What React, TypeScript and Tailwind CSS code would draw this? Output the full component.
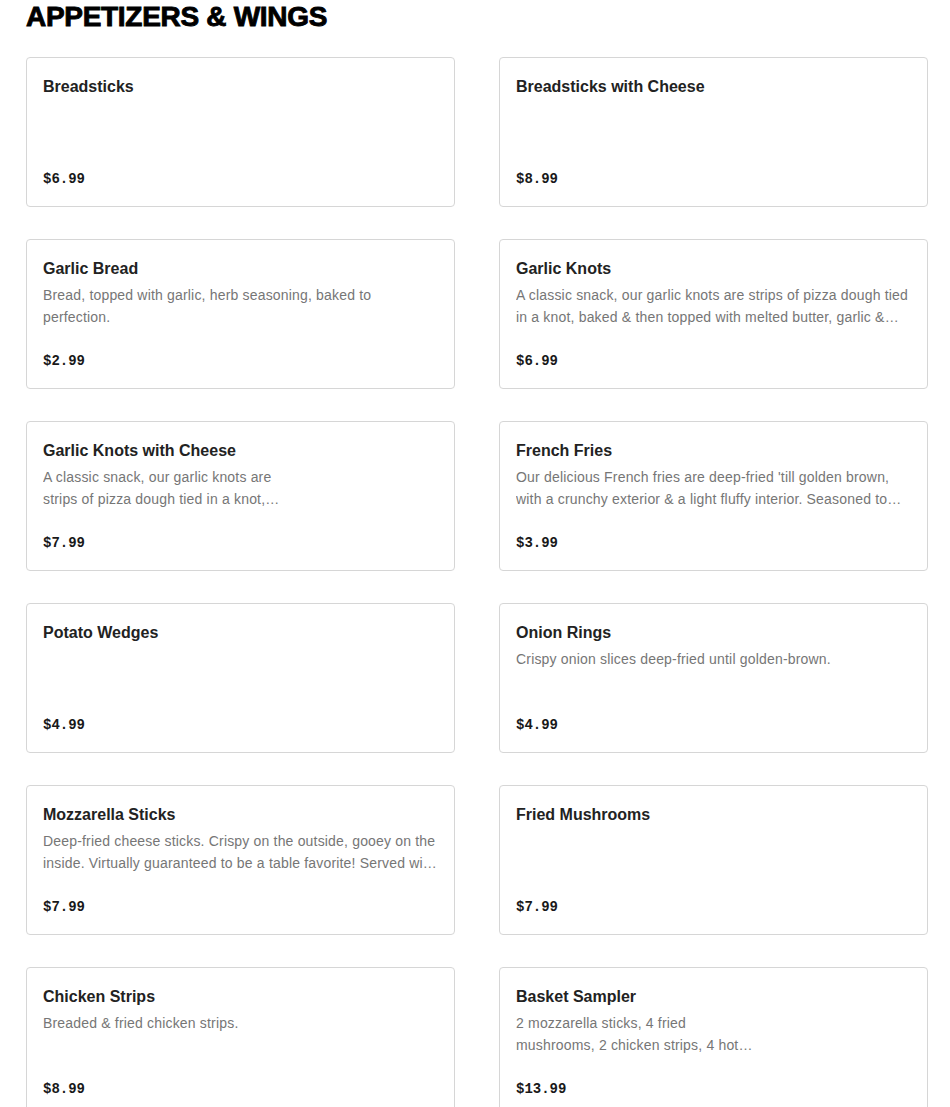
import React from "react"

type Item = { name: string, price: string, desc?: string, width?: string }

const items: Item[] = [
  { name: "Breadsticks", price: "$6.99" },
  { name: "Breadsticks with Cheese", price: "$8.99" },
  { name: "Garlic Bread", price: "$2.99", desc: "Bread, topped with garlic, herb seasoning, baked to perfection.", width: "max-w-[340px]" },
  { name: "Garlic Knots", price: "$6.99", desc: "A classic snack, our garlic knots are strips of pizza dough tied in a knot, baked & then topped with melted butter, garlic & parmesan cheese." },
  { name: "Garlic Knots with Cheese", price: "$7.99", desc: "A classic snack, our garlic knots are strips of pizza dough tied in a knot, baked & then topped with melted butter, garlic & parmesan cheese.", width: "max-w-[255px]" },
  { name: "French Fries", price: "$3.99", desc: "Our delicious French fries are deep-fried 'till golden brown, with a crunchy exterior & a light fluffy interior. Seasoned to perfection." },
  { name: "Potato Wedges", price: "$4.99" },
  { name: "Onion Rings", price: "$4.99", desc: "Crispy onion slices deep-fried until golden-brown." },
  { name: "Mozzarella Sticks", price: "$7.99", desc: "Deep-fried cheese sticks. Crispy on the outside, gooey on the inside. Virtually guaranteed to be a table favorite! Served with marinara sauce." },
  { name: "Fried Mushrooms", price: "$7.99" },
  { name: "Chicken Strips", price: "$8.99", desc: "Breaded & fried chicken strips." },
  { name: "Basket Sampler", price: "$13.99", desc: "2 mozzarella sticks, 4 fried mushrooms, 2 chicken strips, 4 hot wings & fries.", width: "max-w-[245px]" },
]

const MenuCard: React.FC<{ item: Item }> = ({ item }) => (
  <div className="flex h-[150px] flex-col rounded border border-[#d6d6d6] bg-white px-4 pt-[17px] pb-4">
    <div className="text-[16px] leading-6 font-bold text-[#222222]">{ item.name }</div>
    { item.desc ? (
      <div className={ `mt-[3px] line-clamp-2 text-[14px] leading-[22px] tracking-[0.18px] text-[#767676] ${ item.width ?? "" }` }>
        { item.desc }
      </div>
    ) : null }
    <div className="mt-auto font-['Liberation_Mono',monospace] text-[14px] leading-[22px] font-bold text-[#191919]">
      { item.price }
    </div>
  </div>
)

export default function App() {
  return (
    <div className="min-h-[1107px] bg-white pl-[26px] font-['Liberation_Sans',Arial,sans-serif]">
      <h1 className="text-[28px] leading-[34px] font-black tracking-[-0.3px] text-black [-webkit-text-stroke:0.9px_black]">
        APPETIZERS &amp; WINGS
      </h1>
      <div className="mt-[23px] grid grid-cols-[429px_429px] gap-x-[44px] gap-y-[32px]">
        { items.map(item => <MenuCard key={ item.name } item={ item }/>) }
      </div>
    </div>
  )
}
